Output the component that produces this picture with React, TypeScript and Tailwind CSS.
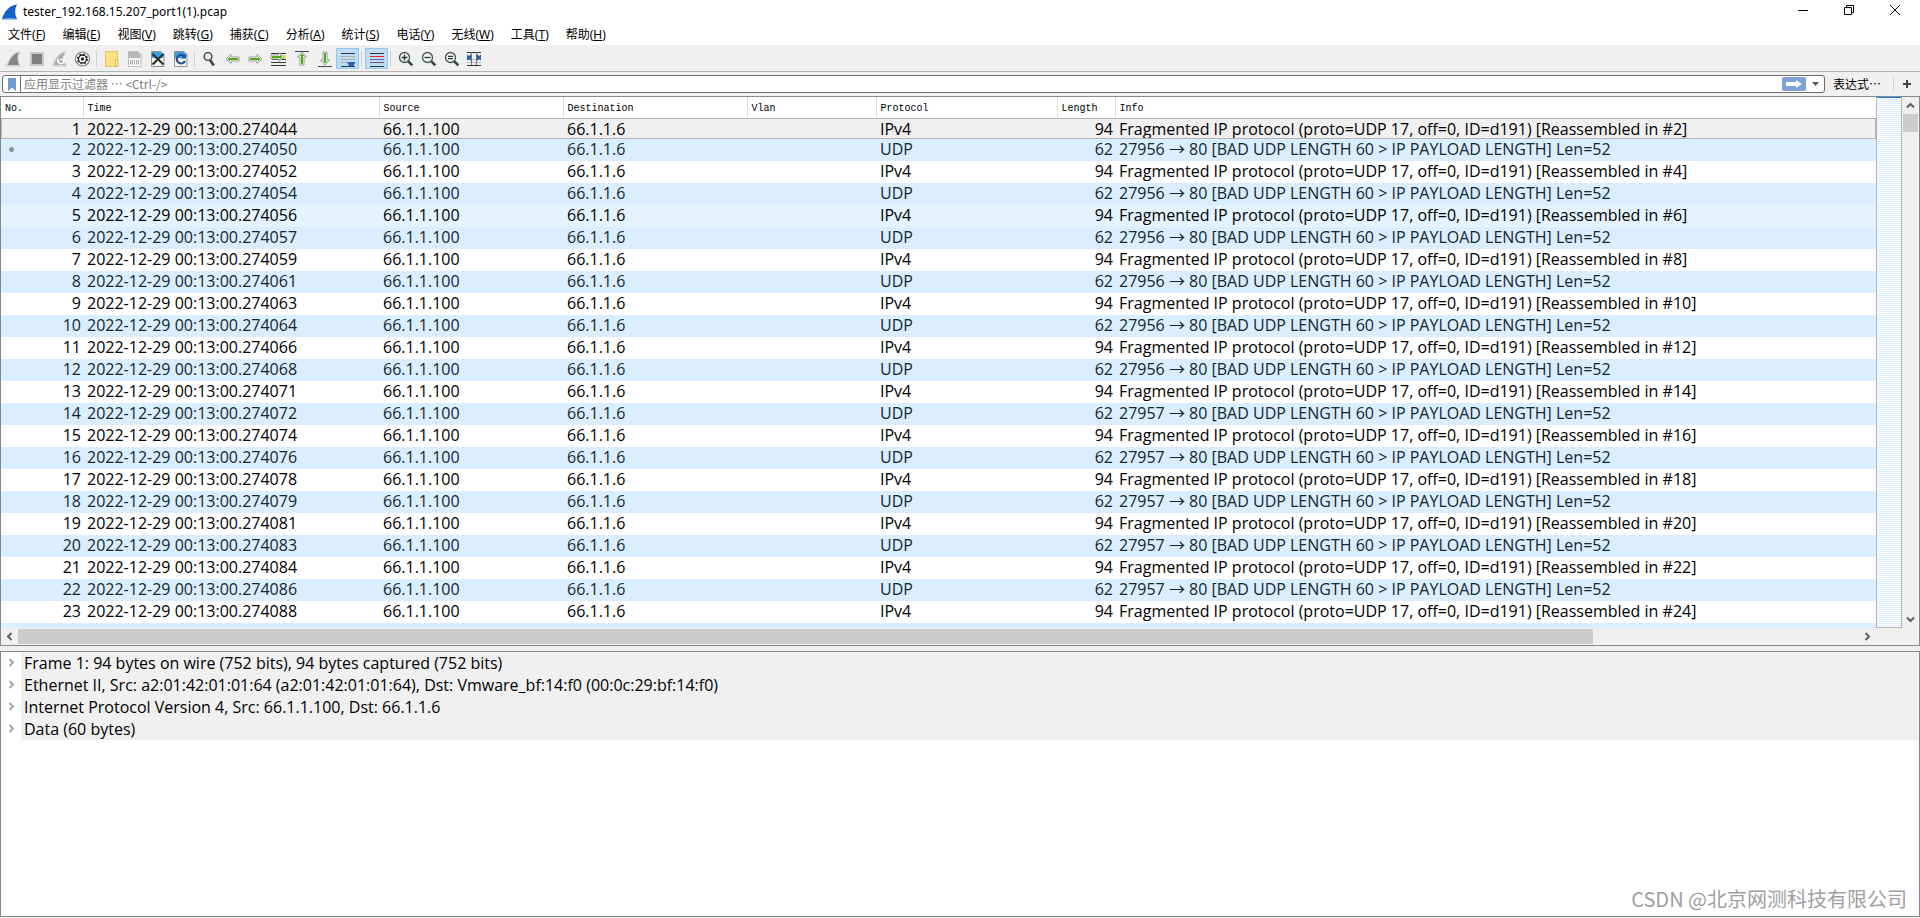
import React from "react";

interface Packet {
    no: number;
    time: string;
    port: number;
}

const times = [
    "044", "050", "052", "054", "056", "057", "059", "061", "063", "064", "066", "068",
    "071", "072", "074", "076", "078", "079", "081", "083", "084", "086", "088",
];

const packets: Packet[] = times.map((t, i) => ({
    no: i + 1,
    time: `2022-12-29 00:13:00.274${t}`,
    port: i + 1 < 14 ? 27956 : 27957,
}));

const menus = [
    ["文件", "F"], ["编辑", "E"], ["视图", "V"], ["跳转", "G"], ["捕获", "C"], ["分析", "A"],
    ["统计", "S"], ["电话", "Y"], ["无线", "W"], ["工具", "T"], ["帮助", "H"],
];

const columns = [
    { name: "No.", width: "w-[82px]" },
    { name: "Time", width: "w-[296px]" },
    { name: "Source", width: "w-[184px]" },
    { name: "Destination", width: "w-[184px]" },
    { name: "Vlan", width: "w-[129px]" },
    { name: "Protocol", width: "w-[181px]" },
    { name: "Length", width: "w-[58px]" },
    { name: "Info", width: "" },
];

const details = [
    "Frame 1: 94 bytes on wire (752 bits), 94 bytes captured (752 bits)",
    "Ethernet II, Src: a2:01:42:01:01:64 (a2:01:42:01:01:64), Dst: Vmware_bf:14:f0 (00:0c:29:bf:14:f0)",
    "Internet Protocol Version 4, Src: 66.1.1.100, Dst: 66.1.1.6",
    "Data (60 bytes)",
];

const Tool: React.FC<{ label: string; active?: boolean; children: React.ReactNode }> = ({ label, active, children }) => (
    <button
        aria-label={label}
        className={`flex h-[21px] w-[23px] items-center justify-center ${active ? "border border-[#90c8f6] bg-[#c0dcf3]" : ""}`}
    >
        <svg width="15" height="15" viewBox="0 0 15 15" fill="none" className="shrink-0 overflow-visible" aria-hidden="true">
            {children}
        </svg>
    </button>
);

const Separator = () => <div className="mx-[2px] h-4 w-[2px] border-l border-[#d0d0d0]" />;

const Fin: React.FC<{ color: string }> = ({ color }) => (
    <>
        <path d="M0 15.500C2 8 6.500 1 14.500 0c-2.500 4.500-2.500 9.500.5 15.500z" fill="#d2d2d2" />
        <path d="M2 14C4 7.500 7.500 3 12.500 1.500c-1.500 4-1.500 8.500.5 12.500z" fill={color} />
    </>
);

const Sheet = () => (
    <>
        <path d="M1.500.5h9.500l3 3v12h-12.500z" fill="#f4f6e8" stroke="#8f948c" />
        <path d="M2 1h9l2.500 2.500V7H2z" fill="#3ba0e6" />
    </>
);

const Lens: React.FC<{ sign: string }> = ({ sign }) => (
    <>
        <circle cx="6.500" cy="6.500" r="5" fill="#f4f6f7" stroke="#4a5256" strokeWidth="1.300" />
        <path d="M10.300 10.300l4 4" stroke="#3a4246" strokeWidth="2.600" />
        <path d={sign} stroke="#2c3336" strokeWidth="1.300" />
    </>
);

// pale outlined arrow with a green core
const Arrow: React.FC<{ turn: string }> = ({ turn }) => (
    <g transform={turn}>
        <path d="M1 8l5-4.500v2.500h8v4H6v2.500z" fill="#fff" stroke="#8d9488" strokeWidth=".9" />
        <path d="M2.600 8L5 5.700v1.300h8v2H5v1.300z" fill="#4fae14" />
    </g>
);

const Toolbar = () => (
    <div className="flex h-[26px] shrink-0 items-center border-b border-[#b4b4b4] bg-[#f0f0f0] pl-[2px]" role="toolbar">
        <Tool label="开始捕获"><Fin color="#858585" /></Tool>
        <Tool label="停止捕获">
            <path d="M1 1h14v14H1z" fill="#c9c9c9" />
            <path d="M3 3h10v10H3z" fill="#808080" />
        </Tool>
        <Tool label="重新开始捕获">
            <Fin color="#ababab" />
            <path d="M6.500 8a3 3 0 1 0 5 0M12 5v3.500H8.500" stroke="#fff" strokeWidth="1.600" />
        </Tool>
        <Tool label="捕获选项">
            <circle cx="7.500" cy="8" r="7" fill="#fff" stroke="#7c7c7c" strokeWidth="1.200" />
            <circle cx="7.500" cy="8" r="4" stroke="#222" strokeWidth="1.300" />
            <circle cx="7.500" cy="8" r="5" stroke="#222" strokeWidth="1.200" strokeDasharray="1.963 1.963" />
            <circle cx="7.500" cy="8" r="1.700" fill="#222" />
        </Tool>
        <Separator />
        <Tool label="打开">
            <path d="M1.500.5h12v15h-12z" fill="#ffe08a" stroke="#e8c55a" />
            <path d="M11.500 8.500h2.500v7h-3z" fill="#ffe9a8" stroke="#e0b94a" />
        </Tool>
        <Tool label="保存">
            <path d="M1.500.5h9.500l3 3v12h-12.500z" fill="#fafafa" stroke="#bbb" />
            <path d="M2 1h9l2.500 2.500V7H2z" fill="#b8b8b8" />
            <path d="M3.500 9.500h2v3.500h-2zM7.500 9v4.500M9.500 9.500h2v3.500h-2z" stroke="#aaa" />
        </Tool>
        <Tool label="关闭">
            <Sheet />
            <path d="M2.500 3l11 10.500M13.500 3L2.500 13.500" stroke="#26323a" strokeWidth="2.200" />
        </Tool>
        <Tool label="重新加载">
            <Sheet />
            <path d="M11 5A4.300 4.300 0 1 0 12 10" stroke="#1f4f9a" strokeWidth="2.200" />
            <path d="M13 2.500v5H8z" fill="#1f4f9a" />
        </Tool>
        <Separator />
        <Tool label="查找">
            <circle cx="6" cy="5.500" r="3.900" fill="#e8eef2" stroke="#3a4246" strokeWidth="1.400" />
            <path d="M8 9l3.800 5.500" stroke="#3a4246" strokeWidth="2.600" />
        </Tool>
        <Tool label="后退"><Arrow turn="rotate(0)" /></Tool>
        <Tool label="前进"><Arrow turn="rotate(180 7.500 8)" /></Tool>
        <Tool label="转到分组">
            <path d="M0 2.500h15M0 11.500h15M0 14.500h15" stroke="#30383a" strokeWidth="1.200" />
            <path d="M10 4h5v5h-5z" fill="#f2e24a" />
            <path d="M1 8.500h14" stroke="#30383a" />
            <g transform="translate(0 -2)"><Arrow turn="rotate(180 7 8)" /></g>
        </Tool>
        <Tool label="第一个分组">
            <path d="M1 .5h14" stroke="#454b4b" />
            <Arrow turn="rotate(90 8 8)" />
        </Tool>
        <Tool label="最新分组">
            <path d="M1 15.500h14" stroke="#454b4b" />
            <Arrow turn="rotate(-90 7.500 7.500)" />
        </Tool>
        <Tool label="自动滚动" active>
            <path d="M1 2.500h14M1 15.500h14" stroke="#30383a" />
            <path d="M1 5.500h14M1 8.500h14M1 11.500h14" stroke="#a9afa6" />
            <path d="M7 11h8.500l-2 4h-4.500z" fill="#2d5fae" />
        </Tool>
        <Separator />
        <Tool label="着色" active>
            <path d="M1 2.500h14M1 15.500h14" stroke="#30383a" />
            <path d="M1 5.500h14" stroke="#ee2222" />
            <path d="M1 8.500h14" stroke="#5a6cb4" />
            <path d="M1 11.500h14" stroke="#75507b" />
        </Tool>
        <Separator />
        <Tool label="放大"><Lens sign="M3.500 6.500h6M6.500 3.500v6" /></Tool>
        <Tool label="缩小"><Lens sign="M3.500 6.500h6" /></Tool>
        <Tool label="普通大小"><Lens sign="M4 5.300h5M4 7.700h5" /></Tool>
        <Tool label="调整列宽">
            <path d="M0 1.500h14M0 14.500h14" stroke="#30383a" />
            <path d="M0 11.500h14M0 8.500h14" stroke="#b5b9b2" />
            <path d="M4.500 1v13M9.500 1v13" stroke="#73797b" />
            <path d="M0 3.500l2 1.500 2-2v7l-2-2-2 1.500zM14 3.500L12 5l-2-2v7l2-2 2 1.500z" fill="#2d5fae" />
        </Tool>
    </div>
);

const TitleBar = () => (
    <header className="flex h-6 shrink-0 items-center pl-[2px]">
        <svg width="16" height="16" viewBox="0 0 16 16" aria-hidden="true">
            <path d="M0 15C2 7.500 7.500 1 15 0.500 12.500 5 12.500 10 15 15z" fill="#1261c9" />
            <path d="M0 15c5-1.200 10-1.200 15 0v.8H0z" fill="#8fb0d8" />
        </svg>
        <h1 className="ml-[5px] font-[Noto_Sans,sans-serif] text-[12px] leading-4">tester_192.168.15.207_port1(1).pcap</h1>
        <div className="ml-auto flex pr-[2px] pb-[4px]">
            <button aria-label="最小化" className="flex w-[46px] justify-center">
                <svg width="10" height="10" viewBox="0 0 10 10"><path d="M0 5.500h10" stroke="#000" /></svg>
            </button>
            <button aria-label="还原" className="flex w-[46px] justify-center">
                <svg width="10" height="10" viewBox="0 0 10 10" fill="none">
                    <path d="M.5 2.500h7v7h-7zM2.500 2.500v-2h7v7h-2" stroke="#000" />
                </svg>
            </button>
            <button aria-label="关闭窗口" className="flex w-[46px] justify-center">
                <svg width="10" height="10" viewBox="0 0 10 10"><path d="M0 0l10 10M10 0L0 10" stroke="#000" /></svg>
            </button>
        </div>
    </header>
);

const FilterBar = () => (
    <div className="flex h-6 shrink-0 items-center bg-[#f0f0f0] pl-[2px] font-[Noto_Sans_CJK_SC,sans-serif] text-[12px]">
        <div className="flex h-[18px] grow items-center rounded-[3px] border border-[#6e6e6e] bg-white">
            <button aria-label="书签" className="flex h-4 w-[18px] items-center justify-center border-r border-[#6e6e6e]">
                <svg width="8" height="13" viewBox="0 0 8 13"><path d="M0 0h8v13L4 9.500 0 13z" fill="#6f9bd1" /></svg>
            </button>
            <input
                aria-label="显示过滤器"
                placeholder="应用显示过滤器 … <Ctrl-/>"
                className="h-4 grow pl-[3px] outline-none placeholder:text-[#808080]"
            />
            <button aria-label="应用" className="flex h-[14px] w-6 items-center justify-center rounded-[2px] bg-[#7aa3d6]">
                <svg width="16" height="8" viewBox="0 0 16 8"><path d="M0 2h10V0l6 4-6 4V6H0z" fill="#fff" /></svg>
            </button>
            <button aria-label="历史" className="flex w-[18px] justify-center">
                <svg width="7" height="4" viewBox="0 0 7 4"><path d="M0 0h7L3.500 4z" fill="#555" /></svg>
            </button>
        </div>
        <button className="ml-2 w-[52px] text-left leading-4 whitespace-nowrap">表达式…</button>
        <div className="ml-2 h-[14px] border-l border-[#cfcfcf]" />
        <button aria-label="添加过滤器按钮" className="flex w-[26px] justify-center">
            <svg width="8" height="8" viewBox="0 0 8 8"><path d="M0 4h8M4 0v8" stroke="#444" strokeWidth="2" /></svg>
        </button>
    </div>
);

const rowColor = (no: number) => {
    if (no === 1) return "h-[21px] bg-[#f0f0f0] text-black outline outline-[#b4b4b4] -outline-offset-1";
    if (no === 5) return "h-[22px] bg-[#e5f3ff] text-black";
    return no % 2 ? "h-[22px] bg-white text-black" : "h-[22px] bg-[#daeeff] text-[#12272e]";
};

const PacketTable = () => (
    <table className="w-full table-fixed border-collapse">
        <thead>
            <tr className="h-[21px] border-b border-[#b4b4b4]">
                {columns.map((c) => (
                    <th
                        key={c.name}
                        className={`${c.width} border-r border-[#e0e0e0] p-0 pl-1 text-left align-bottom font-[Liberation_Mono,monospace] text-[10px] leading-[18px] font-normal last:border-r-0`}
                    >
                        {c.name}
                    </th>
                ))}
            </tr>
        </thead>
        <tbody className="text-[16px] leading-5 whitespace-nowrap">
            {packets.map((p) => {
                const udp = p.no % 2 === 0;
                return (
                    <tr key={p.no} className={rowColor(p.no)}>
                        <td className="p-0 align-top">
                            <div className="flex items-center pr-[2px] pl-2">
                                {p.no === 2 && <span className="size-[5px] rounded-full bg-[#8795a0]" />}
                                <span className="ml-auto">{p.no}</span>
                            </div>
                        </td>
                        <td className="p-0 pl-1 align-top">{p.time}</td>
                        <td className="p-0 pl-1 align-top">66.1.1.100</td>
                        <td className="p-0 pl-1 align-top">66.1.1.6</td>
                        <td className="p-0" />
                        <td className="p-0 pl-1 align-top">{udp ? "UDP" : "IPv4"}</td>
                        <td className="p-0 pr-[2px] text-right align-top">{udp ? 62 : 94}</td>
                        <td className="p-0 pl-1 align-top">
                            {udp
                                ? `${p.port} → 80 [BAD UDP LENGTH 60 > IP PAYLOAD LENGTH] Len=52`
                                : `Fragmented IP protocol (proto=UDP 17, off=0, ID=d191) [Reassembled in #${p.no + 1}]`}
                        </td>
                    </tr>
                );
            })}
            <tr className="h-[22px] bg-[#daeeff]">
                <td colSpan={8} />
            </tr>
        </tbody>
    </table>
);

const Chevron: React.FC<{ d: string; color: string }> = ({ d, color }) => (
    <svg width="9" height="9" viewBox="0 0 9 9" fill="none" aria-hidden="true">
        <path d={d} stroke={color} strokeWidth="2" />
    </svg>
);

const PacketList = () => (
    <section className="flex min-h-0 grow-[550] basis-0 flex-col border border-[#828790] bg-[#f0f0f0]">
        <div className="flex min-h-0 grow">
            <div className="min-w-0 grow overflow-hidden bg-white">
                <PacketTable />
            </div>
            <div className="w-[26px] shrink-0 border-x border-b border-[#b4b4b4] bg-[repeating-linear-gradient(#daeeff_0_1px,#fff_1px_2px)]">
                <div className="h-px bg-[#1979ca]" />
            </div>
            <div className="flex w-[17px] shrink-0 flex-col items-center bg-[#f0f0f0]">
                <button aria-label="向上滚动" className="flex h-[17px] items-center">
                    <Chevron d="M1 6.500L4.500 3 8 6.500" color="#606060" />
                </button>
                <div className="h-[18px] w-[15px] bg-[#cdcdcd]" />
                <button aria-label="向下滚动" className="mt-auto flex h-[17px] items-center">
                    <Chevron d="M1 2.500L4.500 6 8 2.500" color="#606060" />
                </button>
            </div>
        </div>
        <div className="flex h-[17px] shrink-0 items-center pr-[43px]">
            <button aria-label="向左滚动" className="flex w-[17px] justify-center">
                <Chevron d="M6.500 1L3 4.500 6.500 8" color="#606060" />
            </button>
            <div className="flex grow">
                <div className="h-[15px] grow-[1575] bg-[#cdcdcd]" />
                <div className="grow-[266]" />
            </div>
            <button aria-label="向右滚动" className="flex w-[17px] justify-center">
                <Chevron d="M2.500 1L6 4.500 2.500 8" color="#606060" />
            </button>
        </div>
    </section>
);

const PacketDetails = () => (
    <section className="mt-[5px] mb-px min-h-0 grow-[265] basis-0 overflow-hidden border border-[#828790] bg-white">
        <ul className="text-[16px] leading-[22px]">
            {details.map((d) => (
                <li key={d} className="flex items-center">
                    <button aria-label="展开" className="flex w-5 shrink-0 justify-center">
                        <Chevron d="M2.500 1L6 4.500 2.500 8" color="#a6a6a6" />
                    </button>
                    <span className="grow bg-[#f0f0f0] pl-[3px] whitespace-nowrap">{d}</span>
                </li>
            ))}
        </ul>
    </section>
);

const App = () => (
    <div lang="zh-CN" className="relative flex h-screen flex-col overflow-hidden bg-[#f0f0f0] font-[Open_Sans,Noto_Sans_CJK_SC,sans-serif] text-black">
        <div className="shrink-0 bg-white">
            <TitleBar />
            <nav className="flex h-[22px] items-center gap-px border-b border-[#f0f0f0] font-[Noto_Sans,Noto_Sans_CJK_SC,sans-serif] text-[12px] leading-4">
                {menus.map(([name, key]) => (
                    <button key={key} className="px-2">
                        {name}(<span className="underline">{key}</span>)
                    </button>
                ))}
            </nav>
        </div>
        <Toolbar />
        <FilterBar />
        <PacketList />
        <PacketDetails />
        <p className="absolute right-[13px] bottom-[7px] font-[Noto_Sans_CJK_SC,sans-serif] text-[20px] leading-6 text-[#a0a0a0]">
            CSDN @北京网测科技有限公司
        </p>
    </div>
);

export default App;
